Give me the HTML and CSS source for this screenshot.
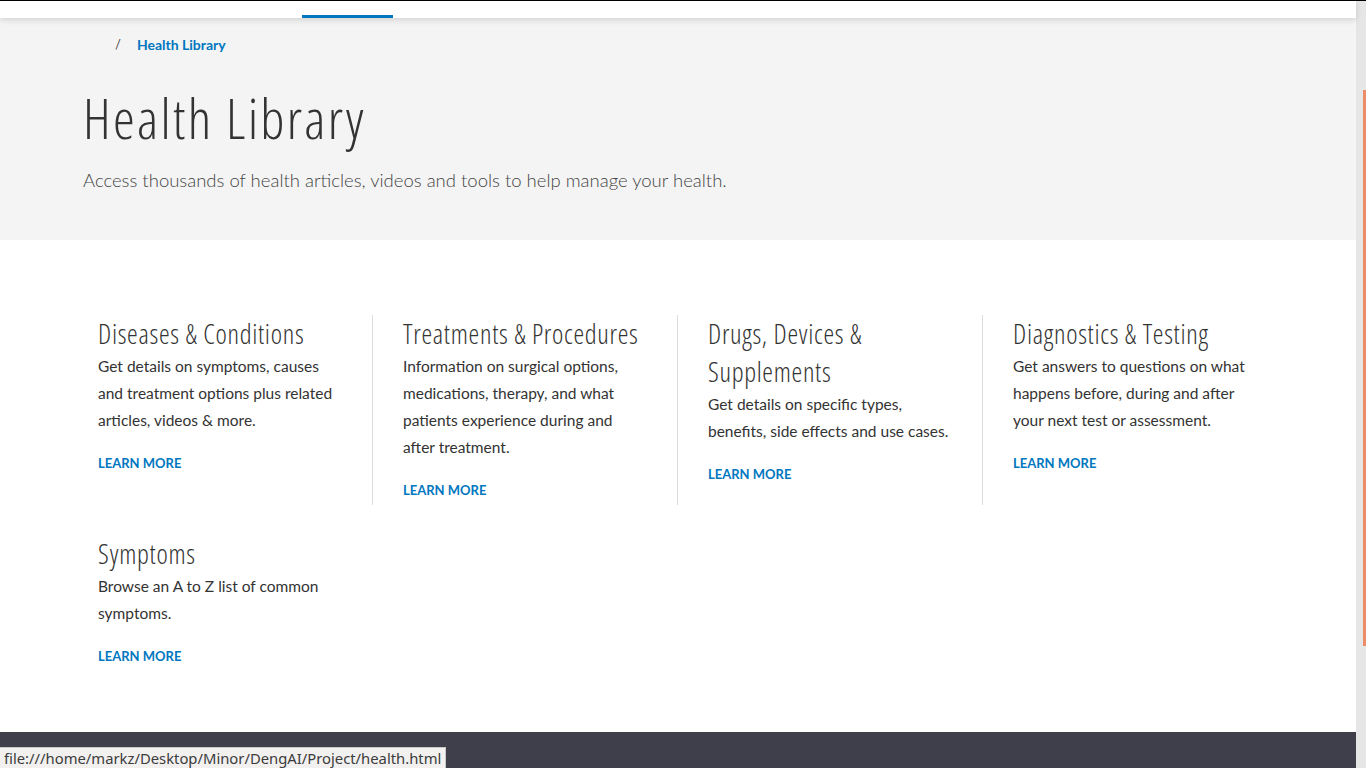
FILE: index.html
```html
<!DOCTYPE html>
<html lang="en">
<head>
<meta charset="utf-8">
<title>Health Library</title>
<link rel="stylesheet" href="styles.css">
</head>
<body>
<div class="window">
  <div class="page">
    <header class="topbar">
      <nav class="nav">
        <a class="nav-item active" href="#"></a>
      </nav>
    </header>

    <section class="hero">
      <div class="breadcrumb">
        <span class="sep">/</span>
        <a class="crumb" href="#">Health Library</a>
      </div>
      <h1 class="hero-title">Health Library</h1>
      <p class="hero-sub">Access thousands of health articles, videos and tools to help manage your health.</p>
    </section>

    <section class="cards">
      <div class="card">
        <h2 class="card-title">Diseases &amp; Conditions</h2>
        <p class="card-text">Get details on symptoms, causes and treatment options plus related articles, videos &amp; more.</p>
        <a class="card-link" href="#">LEARN MORE</a>
      </div>
      <div class="card">
        <h2 class="card-title">Treatments &amp; Procedures</h2>
        <p class="card-text">Information on surgical options, medications, therapy, and what patients experience during and after treatment.</p>
        <a class="card-link" href="#">LEARN MORE</a>
      </div>
      <div class="card">
        <h2 class="card-title">Drugs, Devices &amp; Supplements</h2>
        <p class="card-text">Get details on specific types, benefits, side effects and use cases.</p>
        <a class="card-link" href="#">LEARN MORE</a>
      </div>
      <div class="card">
        <h2 class="card-title">Diagnostics &amp; Testing</h2>
        <p class="card-text">Get answers to questions on what happens before, during and after your next test or assessment.</p>
        <a class="card-link" href="#">LEARN MORE</a>
      </div>
      <div class="card">
        <h2 class="card-title">Symptoms</h2>
        <p class="card-text">Browse an A to Z list of common symptoms.</p>
        <a class="card-link" href="#">LEARN MORE</a>
      </div>
    </section>

    <footer class="footer"></footer>
  </div>
  <div class="scrollbar"><div class="thumb"></div></div>
</div>
<div class="statusbar">file:///home/markz/Desktop/Minor/DengAI/Project/health.html</div>
</body>
</html>
```

FILE: styles.css
```css
html, body {
  margin: 0;
  padding: 0;
}

body {
  font-family: "Lato", "Liberation Sans", sans-serif;
  color: #333;
  background: #fff;
  overflow: hidden;
}

.window {
  display: flex;
  height: 767px;
  border-top: 1px solid #000;
  overflow: hidden;
}

.page {
  flex: 1;
  display: flex;
  flex-direction: column;
  min-width: 0;
}

.topbar {
  height: 17px;
  background: #fff;
  box-shadow: 0 2px 6px rgba(0, 0, 0, 0.14);
  position: relative;
  z-index: 1;
  flex: none;
}

.nav {
  display: flex;
  padding-left: 302px;
  height: 100%;
}

.nav-item {
  display: block;
  width: 91px;
  height: 14px;
  border-bottom: 3px solid #0077c0;
}

.hero {
  background: #f4f4f4;
  height: 222px;
  box-sizing: border-box;
  padding: 16px 0 0 83px;
  flex: none;
}

.breadcrumb {
  display: flex;
  align-items: center;
  height: 20px;
  font-size: 14px;
  padding-left: 32px;
}

.sep {
  color: #444;
  font-size: 13px;
  margin-right: 16px;
}

.crumb {
  color: #0077c0;
  font-weight: 700;
  text-decoration: none;
}

.hero-title {
  margin: 32px 0 0;
  font-family: "Open Sans", "Liberation Sans", sans-serif;
  font-stretch: 75%;
  font-weight: 300;
  font-size: 55px;
  line-height: 64px;
  color: #333;
  letter-spacing: 2.3px;
}

.hero-sub {
  margin: 17px 0 0;
  font-size: 18.5px;
  font-weight: 300;
  line-height: 26px;
  color: #444;
}

.cards {
  display: grid;
  grid-template-columns: repeat(4, 305px);
  row-gap: 30px;
  padding: 75px 0 61px 83px;
  background: #fff;
  flex: none;
}

.card {
  margin-right: 15px;
  padding: 0 30px 5px 15px;
  border-right: 1px solid #dcdcdc;
  display: flex;
  flex-direction: column;
  align-items: flex-start;
}

.card:nth-child(4n),
.card:last-child {
  border-right: none;
}

.card-title {
  margin: 0;
  font-family: "Open Sans", "Liberation Sans", sans-serif;
  font-stretch: 75%;
  font-weight: 300;
  font-size: 27px;
  line-height: 38px;
  color: #333;
  letter-spacing: 0.7px;
}

.card-text {
  margin: 0;
  font-size: 15.5px;
  line-height: 27px;
  color: #333;
}

.card-link {
  margin-top: 19px;
  font-size: 13px;
  line-height: 20px;
  font-weight: 700;
  color: #0077c0;
  text-decoration: none;
}

.footer {
  flex: 1;
  background: #3e3f4a;
}

.scrollbar {
  width: 10px;
  flex: none;
  background: #e6e6e6;
  display: flex;
  justify-content: flex-end;
  padding-top: 89px;
  box-sizing: border-box;
}

.thumb {
  width: 3px;
  height: 556px;
  background: #ec8c69;
}

.statusbar {
  position: fixed;
  left: 0;
  bottom: 0;
  height: 20px;
  line-height: 20px;
  padding: 0 4px 0 4px;
  background: #f2f1f0;
  border-top: 1px solid #c9c9c9;
  border-right: 1px solid #c9c9c9;
  font-family: "Noto Sans", "DejaVu Sans", sans-serif;
  font-size: 14.8px;
  color: #3c3c3c;
}
```
